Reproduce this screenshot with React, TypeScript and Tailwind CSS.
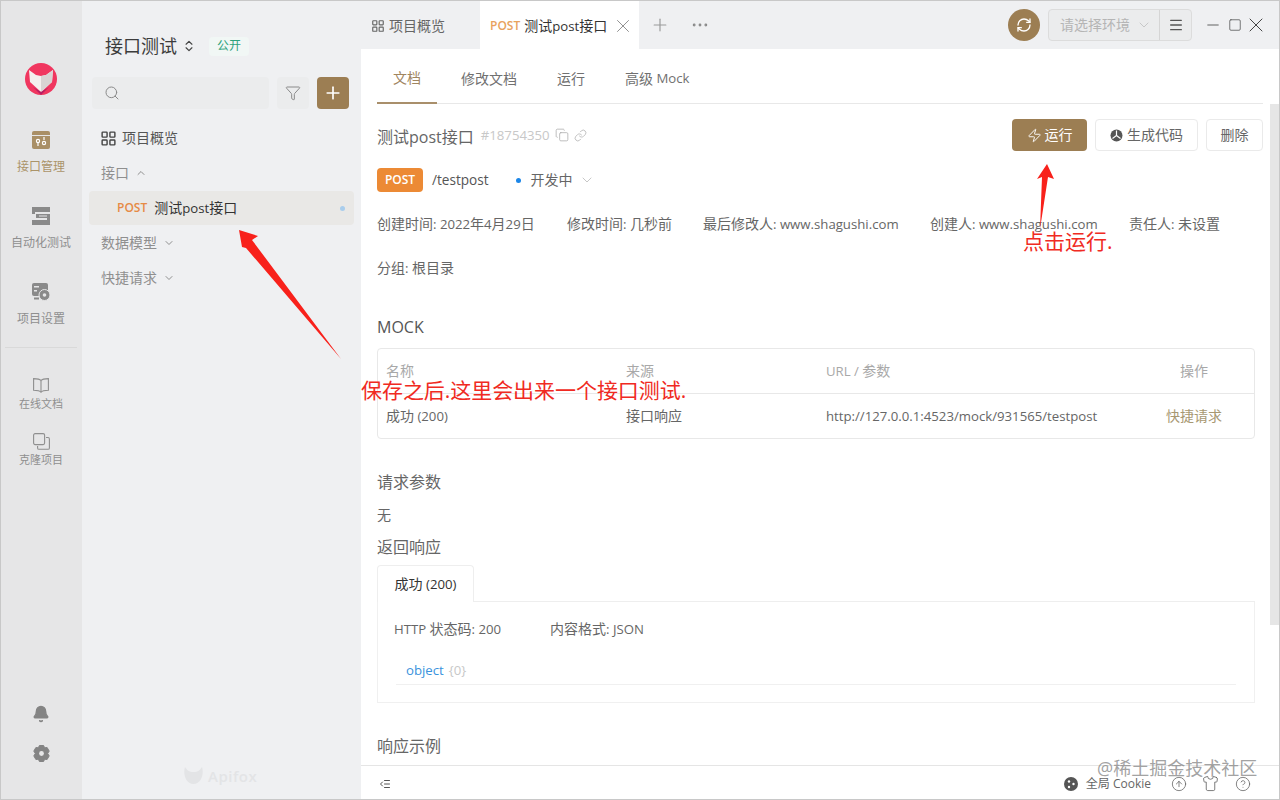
import { Copy, Link, Plus, X, ChevronDown, ChevronUp, ChevronsUpDown, Search, Filter, Ellipsis, Minus, Square, Menu, RefreshCw, Zap, LayoutGrid, CircleArrowUp, Shirt, CircleHelp, Bell, IndentDecrease } from "lucide-react";

const font = "font-['Open_Sans','Noto_Sans_CJK_SC',sans-serif]";

// latin runs sit a bit smaller than the cjk around them
const L = ({ children }: { children: React.ReactNode }) => <span className="text-[13.2px]">{children}</span>;

const Logo = () => (
  <svg width="32" height="32" viewBox="0 0 32 32">
    <circle cx="16" cy="16" r="16" fill="#f0365f" />
    <path d="M4 7 L11 12 L16 13 L21 12 L28 7 L27 19 L16 29 L5 19 Z" fill="#f4efee" />
    <path d="M16 13 L21 12 L28 7 L27 19 L16 29 Z" fill="#d9d3d3" />
    <path d="M8 24 L16 29 L24 24 L16 32 Z" fill="#b81e63" />
  </svg>
);

const ApiIcon = () => (
  <svg width="18" height="18" viewBox="0 0 18 18">
    <rect x="0" y="0" width="18" height="18" rx="2" fill="#a98f66" />
    <rect x="0" y="4" width="18" height="1" fill="#e6e6e7" />
    <circle cx="6" cy="10" r="1.6" fill="none" stroke="#fff" strokeWidth="1.2" />
    <path d="M6 12v3M12 6v3" stroke="#fff" strokeWidth="1.2" />
    <circle cx="12" cy="12" r="1.6" fill="none" stroke="#fff" strokeWidth="1.2" />
  </svg>
);

const AutoIcon = () => (
  <svg width="18" height="18" viewBox="0 0 18 18" fill="#8a8a8a">
    <rect x="0" y="0" width="18" height="5" />
    <rect x="0" y="13" width="18" height="5" />
    <rect x="0" y="5" width="3" height="2" />
    <rect x="15" y="11" width="3" height="2" />
    <rect x="4" y="7" width="14" height="4" />
    <rect x="7" y="8.5" width="8" height="1" fill="#e6e6e7" />
  </svg>
);

const SettingIcon = () => (
  <svg width="18" height="18" viewBox="0 0 18 18">
    <rect x="0" y="0" width="16" height="13" rx="2" fill="#8a8a8a" />
    <rect x="2" y="3" width="5" height="1.5" fill="#e6e6e7" />
    <rect x="2" y="7" width="3" height="1.5" fill="#e6e6e7" />
    <rect x="2" y="14.5" width="5" height="2" fill="#8a8a8a" />
    <circle cx="12.5" cy="12" r="5.5" fill="#8a8a8a" stroke="#e6e6e7" />
    <circle cx="12.5" cy="12" r="1.8" fill="#e6e6e7" />
  </svg>
);

const BookIcon = () => (
  <svg width="16" height="15" viewBox="0 0 16 15" fill="none" stroke="#8f8f8f" strokeWidth="1.1">
    <path d="M8 2.5C7 1.2 5.5 0.6 0.6 0.6v11.6c5 0 6.4 0.6 7.4 2 1-1.4 2.4-2 7.4-2V0.6C10.5 0.6 9 1.2 8 2.5Z" />
    <path d="M8 2.5v11.5" />
  </svg>
);

const CloneIcon = () => (
  <svg width="17" height="17" viewBox="0 0 17 17" fill="none" stroke="#8f8f8f" strokeWidth="1.1">
    <rect x="0.6" y="0.6" width="11" height="11" rx="1.5" />
    <path d="M13 4.5h2a1.4 1.4 0 0 1 1.4 1.4v9a1.4 1.4 0 0 1-1.4 1.4H6a1.4 1.4 0 0 1-1.4-1.4v-2" />
  </svg>
);

const GearIcon = () => (
  <svg width="17" height="17" viewBox="0 0 17 17">
    <path d="M6.4 0.5h4.2l1 2.3 2.5-0.3 2.1 3.6-1.5 2.4 1.5 2.4-2.1 3.6-2.5-0.3-1 2.3H6.4l-1-2.3-2.5 0.3-2.1-3.6 1.5-2.4-1.5-2.4 2.1-3.6 2.5 0.3z" fill="#848484" strokeLinejoin="round" stroke="#848484" />
    <circle cx="8.5" cy="8.5" r="2.4" fill="#e6e6e7" />
  </svg>
);

const CodeIcon = () => (
  <svg width="13" height="13" viewBox="0 0 13 13">
    <circle cx="6.5" cy="6.5" r="6" fill="#555" />
    <path d="M6.5 1.5v5L2.5 9.5M6.5 6.5l4 3" stroke="#fff" strokeWidth="1.2" fill="none" />
  </svg>
);

const CookieIcon = () => (
  <svg width="14" height="14" viewBox="0 0 14 14" fill="#555">
    <circle cx="7" cy="7" r="7" />
    <circle cx="5" cy="4.5" r="1.2" fill="#fff" />
    <circle cx="9.5" cy="7" r="1.2" fill="#fff" />
    <circle cx="5" cy="10" r="1.2" fill="#fff" />
  </svg>
);

const RailItem = ({ icon, label, active, small }: { icon: React.ReactNode; label: string; active?: boolean; small?: boolean }) => (
  <div className="flex flex-col items-center">
    <div className="h-[18px] flex items-center justify-center">{icon}</div>
    <div className={`${small ? "text-[11px] mt-[2px] leading-[16px]" : "text-xs mt-[9px] leading-[18px]"} whitespace-nowrap ${active ? "text-[#ab9469]" : "text-[#8f8f8f]"}`}>{label}</div>
  </div>
);

const Rail = () => (
  <div className="w-[81px] shrink-0 bg-[#e6e6e7] flex flex-col items-center pt-[62px] pr-px">
    <Logo />
    <div className="mt-[36px]">
      <RailItem icon={<ApiIcon />} label="接口管理" active />
    </div>
    <div className="mt-[31px]">
      <RailItem icon={<AutoIcon />} label="自动化测试" />
    </div>
    <div className="mt-[31px]">
      <RailItem icon={<SettingIcon />} label="项目设置" />
    </div>
    <div className="w-[72px] h-px bg-[#d9d9d9] mt-[19px]" />
    <div className="mt-[28px]">
      <RailItem small icon={<BookIcon />} label="在线文档" />
    </div>
    <div className="mt-[20px]">
      <RailItem small icon={<CloneIcon />} label="克隆项目" />
    </div>
    <div className="mt-auto flex flex-col items-center gap-[22px] pb-[37px]">
      <Bell size={18} fill="#848484" color="#848484" />
      <GearIcon />
    </div>
  </div>
);

const TreeHead = ({ label, up }: { label: string; up?: boolean }) => (
  <div className="flex items-center gap-[6px] pl-[19px] h-[34px] text-sm text-[#8f8f8f]">
    {label}
    {up ? <ChevronUp size={12} /> : <ChevronDown size={12} />}
  </div>
);

const Sidebar = () => (
  <div className="w-[279px] shrink-0 bg-[#eff0f2] flex flex-col pt-[34px] relative">
    <div className="flex items-center pl-[23px] h-[22px]">
      <span className="text-lg text-[#3c3c3c]">接口测试</span>
      <ChevronsUpDown size={14} className="ml-[5px] text-[#444]" />
      <span className="ml-[13px] w-[40px] h-[19px] flex items-center justify-center rounded bg-[#f1f7f5] text-xs text-[#2ea37c]">公开</span>
    </div>
    <div className="flex items-center mt-[20px] pl-[10px]">
      <div className="w-[177px] h-[32px] rounded bg-[#ebeced] flex items-center pl-[12px]">
        <Search size={16} strokeWidth={1.5} className="text-[#8a8a8a]" />
      </div>
      <div className="ml-[8px] w-[32px] h-[32px] rounded bg-[#ebeced] flex items-center justify-center">
        <Filter size={16} strokeWidth={1.5} className="text-[#8a8a8a]" />
      </div>
      <div className="ml-[8px] w-[32px] h-[32px] rounded bg-[#9c7e53] flex items-center justify-center">
        <Plus size={20} className="text-white" />
      </div>
    </div>
    <div className="flex items-center pl-[18px] mt-[12px] h-[34px] text-sm text-[#555]">
      <LayoutGrid size={17} className="text-[#444]" />
      <span className="ml-[5px]">项目概览</span>
    </div>
    <div className="mt-px">
      <TreeHead label="接口" up />
    </div>
    <div className="ml-[7px] w-[265px] h-[34px] mt-px rounded bg-[#e9e8e6] flex items-center pl-[28px] pr-[9px]">
      <span className="text-xs font-semibold text-[#e68a45]">POST</span>
      <span className="ml-[7px] text-sm text-[#333] whitespace-nowrap">测试<L>post</L>接口</span>
      <span className="ml-auto w-[5px] h-[5px] rounded-full bg-[#a9cdec]" />
    </div>
    <div className="mt-px">
      <TreeHead label="数据模型" />
    </div>
    <div className="mt-px">
      <TreeHead label="快捷请求" />
    </div>
    <div className="absolute bottom-[12px] left-[102px] flex items-center gap-[5px] text-[#e3e4e6]">
      <svg width="19" height="17" viewBox="0 0 19 17" fill="currentColor">
        <path d="M1 0 C3 3 5 5 9.5 5 C14 5 16 3 18 0 C20 6 18 17 9.5 17 C1 17 -1 6 1 0 Z" />
      </svg>
      <span className="text-[15px] font-semibold tracking-[0.5px]">Apifox</span>
    </div>
  </div>
);

const TopBar = () => (
  <div className="h-[48px] shrink-0 flex items-center bg-[#eff0f2]">
    <div className="flex items-center pl-[10px] w-[119px] pt-px text-sm text-[#666]">
      <LayoutGrid size={14} className="text-[#666]" />
      <span className="ml-[4px]">项目概览</span>
    </div>
    <div className="w-[159px] h-full bg-white flex items-center pl-[10px] pt-px">
      <span className="text-xs font-semibold text-[#e8a25e]">POST</span>
      <span className="ml-[4px] text-sm text-[#333] whitespace-nowrap">测试<L>post</L>接口</span>
      <X size={22} strokeWidth={1} className="ml-[5px] text-[#888]" />
    </div>
    <Plus size={20} strokeWidth={1.4} className="ml-[11px] text-[#999]" />
    <Ellipsis size={20} strokeWidth={1.4} className="ml-[20px] text-[#888]" />
    <div className="ml-auto w-[32px] h-[32px] rounded-full bg-[#9c7e53] flex items-center justify-center">
      <RefreshCw size={16} className="text-white" />
    </div>
    <div className="ml-[8px] h-[32px] flex rounded border border-[#dcdcdc] bg-[#ebeced]">
      <div className="w-[111px] flex items-center pl-[11px] text-sm text-[#b5b5b5] border-r border-[#d5d5d5] whitespace-nowrap">
        请选择环境
        <ChevronDown size={16} strokeWidth={1} className="ml-[6px]" />
      </div>
      <div className="w-[31px] flex items-center justify-center">
        <Menu size={16} className="text-[#555]" />
      </div>
    </div>
    <div className="flex items-center ml-[12px] mr-[11px] text-[#444]">
      <Minus size={18} strokeWidth={1.1} />
      <Square size={14} strokeWidth={1.2} className="ml-[6px]" />
      <X size={24} strokeWidth={1} className="ml-[2px]" />
    </div>
  </div>
);

const Meta = ({ children, w }: { children: React.ReactNode; w: string }) => (
  <div className={`${w} shrink-0 whitespace-nowrap`}>{children}</div>
);

const Btn = ({ children, w }: { children: React.ReactNode; w: string }) => (
  <div className={`${w} h-[32px] rounded border border-[#eaeaea] bg-white flex items-center justify-center gap-[4px] text-sm text-[#666]`}>{children}</div>
);

const Main = () => (
  <div className="flex-1 min-w-0 flex flex-col bg-white">
    <TopBar />
    <div className="flex-1 min-h-0 relative overflow-hidden pl-[16px] pr-[16px]">
      <div className="absolute right-0 top-[55px] w-[9px] h-[521px] bg-[#e6e6e6]" />
      <div className="h-[55px] flex items-end border-b border-[#e8e8e8] text-sm text-[#707070]">
        <div className="w-[60px] h-[53px] flex items-center justify-center pt-[3px] text-[#a0855f] border-b-2 border-[#a98f6b] -mb-px">文档</div>
        <div className="ml-[24px] h-[52px] flex items-center pt-[3px]">修改文档</div>
        <div className="ml-[40px] h-[52px] flex items-center pt-[3px]">运行</div>
        <div className="ml-[40px] h-[52px] flex items-center pt-[3px]">高级 <L>&nbsp;Mock</L></div>
      </div>

      <div className="flex items-center h-[32px] mt-[15px]">
        <span className="text-base text-[#666] pt-[4px]">测试post接口</span>
        <span className="ml-[7px] text-[13.2px] text-[#c8c8c8] pt-[2px]">#18754350</span>
        <Copy size={14} className="ml-[5px] text-[#aaa]" strokeWidth={1.3} />
        <Link size={13} className="ml-[5px] text-[#aaa]" strokeWidth={1.3} />
        <div className="ml-auto flex gap-[8px]">
          <div className="w-[75px] h-[32px] rounded bg-[#9c7e53] flex items-center justify-center gap-[3px] text-sm text-white">
            <Zap size={15} strokeWidth={1.5} />
            运行
          </div>
          <Btn w="w-[103px]">
            <CodeIcon />
            生成代码
          </Btn>
          <Btn w="w-[57px]">删除</Btn>
        </div>
      </div>

      <div className="flex items-center h-[24px] mt-[17px]">
        <span className="w-[46px] h-[24px] rounded bg-[#ec8a35] flex items-center justify-center text-xs font-semibold text-white">POST</span>
        <span className="ml-[9px] text-[13.6px] text-[#555]">/testpost</span>
        <span className="ml-[27px] w-[5px] h-[5px] rounded-full bg-[#1b86e8]" />
        <span className="ml-[10px] text-sm text-[#666]">开发中</span>
        <ChevronDown size={16} strokeWidth={1} className="ml-[6px] text-[#aaa]" />
      </div>

      <div className="flex h-[24px] items-center mt-[20px] text-sm text-[#666]">
        <Meta w="w-[190px]">创建时间<L>: 2022</L>年<L>4</L>月<L>29</L>日</Meta>
        <Meta w="w-[136px]">修改时间<L>: </L>几秒前</Meta>
        <Meta w="w-[227px]">最后修改人<L>: www.shagushi.com</L></Meta>
        <Meta w="w-[199px]">创建人<L>: www.shagushi.com</L></Meta>
        <Meta w="w-[100px]">责任人<L>: </L>未设置</Meta>
      </div>
      <div className="h-[24px] flex items-center mt-[20px] text-sm text-[#666]">
        <span>分组<L>: </L>根目录</span>
      </div>

      <div className="h-[24px] flex items-center mt-[35px] text-base font-medium text-[#555]">MOCK</div>
      <div className="mt-[9px] w-[878px] h-[91px] rounded-sm border border-[#e8e8e8] text-sm">
        <div className="h-[45px] flex items-center pl-[8px] border-b border-[#e8e8e8] text-[#a8a8a8]">
          <span className="w-[240px]">名称</span>
          <span className="w-[200px]">来源</span>
          <span className="w-[354px]"><L>URL / </L>参数</span>
          <span>操作</span>
        </div>
        <div className="h-[44px] flex items-center pl-[8px] text-[#666]">
          <span className="w-[240px]">成功<L> (200)</L></span>
          <span className="w-[200px]">接口响应</span>
          <span className="w-[340px] whitespace-nowrap"><L>http://127.0.0.1:4523/mock/931565/testpost</L></span>
          <span className="text-[#a89872]">快捷请求</span>
        </div>
      </div>

      <div className="h-[24px] flex items-center mt-[31px] text-base text-[#666]">请求参数</div>
      <div className="h-[20px] flex items-center mt-[11px] text-sm text-[#666]">无</div>
      <div className="h-[24px] flex items-center mt-[10px] text-base text-[#666]">返回响应</div>

      <div className="mt-[6px] w-[878px]">
        <div className="flex h-[37px] items-center">
          <div className="w-[97px] h-full flex items-center justify-center rounded-t-sm border border-b-0 border-[#eeeeee] text-sm text-[#333]">成功<L>&nbsp;(200)</L></div>
          <div className="flex-1 self-end border-b border-[#eeeeee]" />
        </div>
        <div className="h-[101px] border border-t-0 border-[#f0f0f0] pt-[15px] pl-[16px] pr-[18px]">
          <div className="flex h-[24px] items-center text-sm text-[#666]">
            <span className="w-[156px]"><L>HTTP </L>状态码<L>: 200</L></span>
            <span>内容格式<L>: JSON</L></span>
          </div>
          <div className="mt-[10px] ml-[2px] h-[34px] flex items-center pl-[10px] pt-[6px] border-b border-[#f0f0f0] text-[13.2px]">
            <span className="text-[#3a93dd]">object</span>
            <span className="ml-[5px] text-[#c8c8c8]">{"{0}"}</span>
          </div>
        </div>
      </div>
      <div className="h-[24px] flex items-center mt-[31px] text-base text-[#666]">响应示例</div>
    </div>
    <div className="h-[34px] shrink-0 border-t border-[#e5e5e5] flex items-center pl-[18px] pr-[28px] pt-[2px] text-xs text-[#666] relative">
      <IndentDecrease size={12} className="text-[#555]" />
      <div className="ml-auto flex items-center">
        <CookieIcon />
        <span className="ml-[8px]">全局 Cookie</span>
        <CircleArrowUp size={16} strokeWidth={1.2} className="ml-[20px]" />
        <Shirt size={17} strokeWidth={1.2} className="ml-[15px]" />
        <CircleHelp size={16} strokeWidth={1.2} className="ml-[16px]" />
      </div>
    </div>
  </div>
);

export default function App() {
  return (
    <div className={`${font} w-[1280px] h-[800px] relative overflow-hidden flex border border-[#c8c8c8] bg-white`}>
      <Rail />
      <Sidebar />
      <Main />

      {/* annotations drawn on top of the screenshot */}
      <svg className="absolute left-0 top-0 pointer-events-none" width="1280" height="800">
        <polygon points="238,229 257,235 251,239 340,358 245,247 241,246" fill="#f8211b" />
        <polygon points="1046,163 1053,178 1047,176 1039,228 1041,176 1036,178" fill="#f8211b" />
      </svg>
      <div className="absolute left-[360px] top-[375px] text-[21px] leading-[28px] tracking-[-0.05px] text-[#f02a22] whitespace-nowrap">保存之后.这里会出来一个接口测试.</div>
      <div className="absolute left-[1022px] top-[228px] text-[21px] leading-[24px] text-[#f02a22] whitespace-nowrap">点击运行.</div>
      <div className="absolute left-[1096px] top-[755px] text-[18px] leading-[24px] text-[#8a8a8a]/80 whitespace-nowrap">@稀土掘金技术社区</div>
    </div>
  );
}
